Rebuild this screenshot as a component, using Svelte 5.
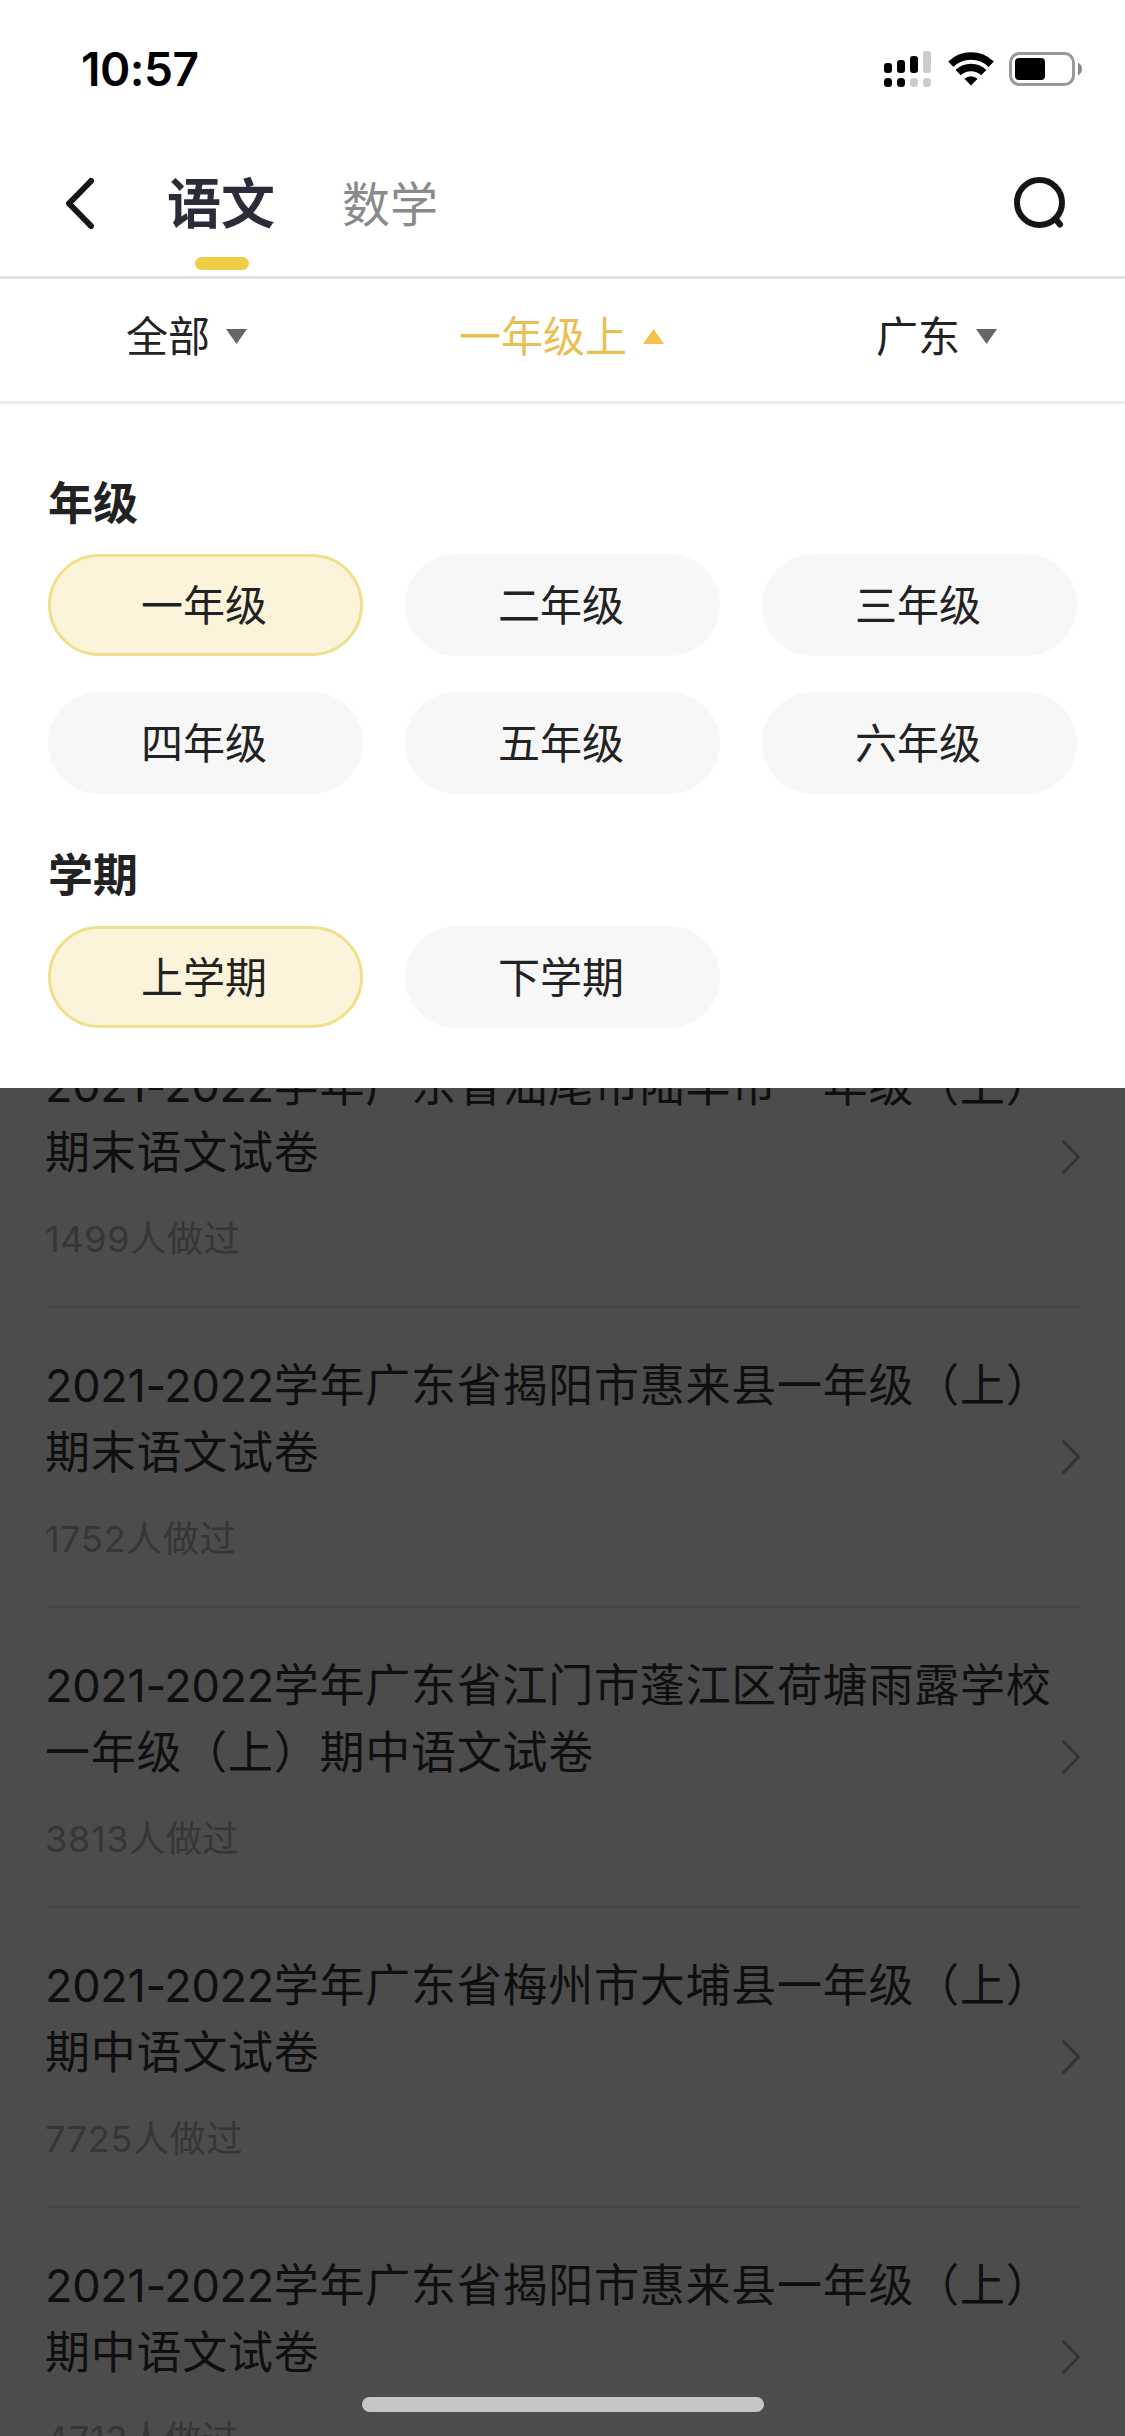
<script>
  let subjects = ['语文', '数学'];
  let activeSubject = $state('语文');

  let openFilter = $state(1);
  let grade = $state('一年级');
  let term = $state('上学期');
  let filters = $derived(['全部', grade + term[0], '广东']);

  let grades = ['一年级', '二年级', '三年级', '四年级', '五年级', '六年级'];
  let terms = ['上学期', '下学期'];

  let papers = [
    { year: '2021-2022', lines: ['学年广东省汕尾市陆丰市一年级（上）', '期末语文试卷'], count: 1499 },
    { year: '2021-2022', lines: ['学年广东省揭阳市惠来县一年级（上）', '期末语文试卷'], count: 1752 },
    { year: '2021-2022', lines: ['学年广东省江门市蓬江区荷塘雨露学校', '一年级（上）期中语文试卷'], count: 3813 },
    { year: '2021-2022', lines: ['学年广东省梅州市大埔县一年级（上）', '期中语文试卷'], count: 7725 },
    { year: '2021-2022', lines: ['学年广东省揭阳市惠来县一年级（上）', '期中语文试卷'], count: 4713 },
  ];
</script>

<div class="screen">
  <div class="status-bar">
    <span class="time">10:57</span>
    <div class="status-icons">
      <svg class="signal" width="47" height="36" viewBox="0 0 47 36">
        <rect x="0" y="12" width="8" height="10" rx="3" />
        <rect x="13" y="9" width="8" height="13" rx="3" />
        <rect x="26" y="5" width="8" height="17" rx="3" />
        <rect class="dim" x="39" y="0" width="8" height="22" rx="3" />
        <rect x="0" y="27" width="8" height="9" rx="3.5" />
        <rect x="13" y="27" width="8" height="9" rx="3.5" />
        <rect class="dim" x="26" y="27" width="8" height="9" rx="3.5" />
        <rect class="dim" x="39" y="27" width="8" height="9" rx="3.5" />
      </svg>
      <svg class="wifi" width="46" height="34" viewBox="0 0 46 34">
        <path class="arc" d="M2.8 12.200A29 29 0 0 1 43.200 12.200" />
        <path class="arc" d="M10.2 20.600A18.500 18.500 0 0 1 35.800 20.600" />
        <path d="M23 33.500L16.4 26.800A9.6 9.6 0 0 1 29.6 26.800Z" />
      </svg>
      <svg class="battery" width="73" height="34" viewBox="0 0 73 34">
        <rect class="shell" x="1.5" y="1.5" width="63" height="31" rx="9" />
        <rect x="6" y="6" width="30" height="22" rx="4" />
        <path class="cap" d="M69 10.5C71.6 12 73 14.300 73 17S71.600 22 69 23.500Z" />
      </svg>
    </div>
  </div>

  <header class="nav">
    <svg class="back" width="30" height="52" viewBox="0 0 30 52">
      <path d="M26 4L4 26.500L26 49" />
    </svg>
    <div class="tabs">
      {#each subjects as subject}
        <button class="tab" class:active={subject === activeSubject} onclick={() => (activeSubject = subject)}>
          {subject}
        </button>
      {/each}
    </div>
    <svg class="search" width="52" height="52" viewBox="0 0 52 52">
      <ellipse cx="25.500" cy="25.500" rx="22.500" ry="22.500" />
      <path d="M41.500 42L46 47.500" />
    </svg>
  </header>

  <div class="filters">
    {#each filters as filter, index}
      <button class="filter" class:open={index === openFilter} onclick={() => (openFilter = index)}>
        <span>{filter}</span>
        <svg width="21" height="15" viewBox="0 0 21 15">
          {#if index === openFilter}
            <path d="M10.500 0L21 15H0Z" />
          {:else}
            <path d="M0 0H21L10.500 15Z" />
          {/if}
        </svg>
      </button>
    {/each}
  </div>

  <section class="panel">
    <h2>年级</h2>
    <div class="options">
      {#each grades as item}
        <button class="option" class:selected={item === grade} onclick={() => (grade = item)}>{item}</button>
      {/each}
    </div>
    <h2>学期</h2>
    <div class="options">
      {#each terms as item}
        <button class="option" class:selected={item === term} onclick={() => (term = item)}>{item}</button>
      {/each}
    </div>
  </section>

  <main class="results">
    <ul>
      {#each papers as paper}
        <li class="paper">
          <div class="info">
            <p class="title">
              <span class="year">{paper.year}</span>{paper.lines[0]}<br />{paper.lines[1]}
            </p>
            <p class="count">{paper.count}人做过</p>
          </div>
          <svg class="arrow" width="18" height="34" viewBox="0 0 18 34">
            <path d="M1.500 1.500L16.500 17L1.500 32.500" />
          </svg>
        </li>
      {/each}
    </ul>
    <div class="mask"></div>
    <div class="home-indicator"></div>
  </main>
</div>

<style>
  :global(body) {
    margin: 0;
  }
  .screen {
    display: flex;
    flex-direction: column;
    width: 1125px;
    height: 2436px;
    overflow: hidden;
    background: #fff;
    color: #222;
    font-family: Inter, 'Noto Sans CJK SC', sans-serif;
  }
  button {
    border: 0;
    padding: 0;
    background: none;
    color: inherit;
    font: inherit;
  }

  /* status bar */
  .status-bar {
    display: flex;
    justify-content: space-between;
    align-items: center;
    height: 138px;
    box-sizing: border-box;
    padding: 0 43px 0 81px;
  }
  .time {
    font-size: 46px;
    font-weight: 600;
    letter-spacing: -0.5px;
    color: #000;
  }
  .status-icons {
    display: flex;
    align-items: center;
    gap: 16px;
  }
  .signal {
    margin-right: 1px;
  }
  .signal .dim {
    fill: #ccc;
  }
  .wifi {
    margin-right: -1px;
  }
  .wifi .arc {
    fill: none;
    stroke: #000;
    stroke-width: 7.5;
  }
  .battery .shell {
    fill: none;
    stroke: #999;
    stroke-width: 3;
  }
  .battery .cap {
    fill: #888;
  }

  /* nav */
  .nav {
    display: flex;
    align-items: center;
    height: 141px;
    box-sizing: border-box;
    padding: 0 59px 9px 65px;
    border-bottom: 3px solid #e3e3e3;
  }
  .back,
  .search {
    fill: none;
    stroke: #151515;
    stroke-width: 6;
    stroke-linecap: round;
    stroke-linejoin: round;
  }
  .tabs {
    display: flex;
    flex: 1;
    align-items: center;
    gap: 67px;
    margin-left: 72px;
    padding-top: 5px;
  }
  .tab {
    position: relative;
    font-size: 48px;
    line-height: 80px;
    color: #888b8b;
  }
  .tab.active {
    font-size: 54px;
    font-weight: 600;
    color: #2a2c39;
  }
  .tab.active::after {
    content: '';
    position: absolute;
    left: 50%;
    bottom: -25px;
    width: 54px;
    height: 13px;
    margin-left: -26px;
    border-radius: 7px;
    background: #f1cc49;
  }

  /* filter row */
  .filters {
    display: grid;
    grid-template-columns: repeat(3, 1fr);
    height: 125px;
    box-sizing: border-box;
    padding-bottom: 8px;
    border-bottom: 3px solid #ececec;
  }
  .filter {
    display: flex;
    justify-content: center;
    align-items: center;
    gap: 16px;
    padding-right: 2px;
    font-size: 42px;
  }
  .filter span {
    padding-bottom: 5px;
  }
  .filter svg {
    fill: #63676a;
  }
  .filter.open {
    color: #e9bf55;
  }
  .filter.open svg {
    fill: #f5c04e;
  }

  /* dropdown panel */
  .panel {
    height: 684px;
    box-sizing: border-box;
    padding: 67px 48px 0;
  }
  h2 {
    margin: 0;
    height: 83px;
    font-size: 45px;
    font-weight: 700;
    line-height: 66px;
  }
  .options {
    display: grid;
    grid-template-columns: repeat(3, 315px);
    gap: 36px 42px;
    margin-bottom: 49px;
  }
  .option {
    height: 102px;
    box-sizing: border-box;
    padding: 0 3px 5px 0;
    border: 3px solid transparent;
    border-radius: 51px;
    background: #f7f7f7 border-box;
    font-size: 42px;
  }
  .option.selected {
    border-color: #f0e08c;
    background: #fcf4da;
  }

  /* result list */
  .results {
    position: relative;
    flex: 1;
    overflow: hidden;
  }
  ul {
    margin: -80px 0 0;
    padding: 0 45px 0 48px;
    list-style: none;
  }
  .paper {
    display: flex;
    align-items: center;
    justify-content: space-between;
    height: 300px;
    box-sizing: border-box;
    border-bottom: 3px solid #e9e9e9;
  }
  .info {
    margin-left: -3px;
    padding-top: 7px;
  }
  p {
    margin: 0;
  }
  .title {
    color: #333;
    font-size: 45px;
    line-height: 67px;
    letter-spacing: 0.75px;
    white-space: nowrap;
  }
  .year {
    letter-spacing: -0.3px;
  }
  .count {
    margin-top: 23px;
    color: #b4b4b4;
    font-size: 36px;
    line-height: 60px;
    letter-spacing: 0.7px;
  }
  .arrow {
    flex: none;
    fill: none;
    stroke: #aaa;
    stroke-width: 3;
    stroke-linecap: round;
  }
  .mask {
    position: absolute;
    inset: 0;
    background: rgba(0, 0, 0, 0.7);
  }
  .home-indicator {
    position: absolute;
    left: 50%;
    bottom: 24px;
    width: 402px;
    height: 15px;
    margin-left: -201px;
    border-radius: 8px;
    background: #c6c6c6;
  }
</style>
